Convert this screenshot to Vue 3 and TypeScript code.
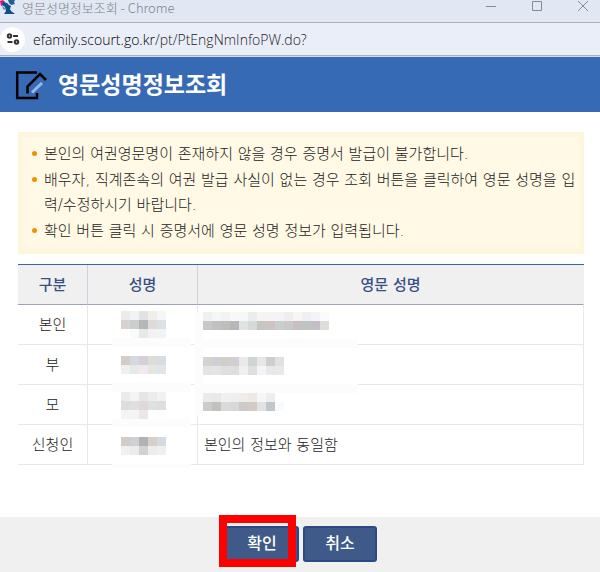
<script setup lang="ts">
interface Row {
  label: string
  english: string
}

interface Mosaic {
  x: number
  y: number
  rows: string[][]
}

const notices: string[] = [
  '본인의 여권영문명이 존재하지 않을 경우 증명서 발급이 불가합니다.',
  '배우자, 직계존속의 여권 발급 사실이 없는 경우 조회 버튼을 클릭하여 영문 성명을 입력/수정하시기 바랍니다.',
  '확인 버튼 클릭 시 증명서에 영문 성명 정보가 입력됩니다.',
]

const rows: Row[] = [
  { label: '본인', english: '' },
  { label: '부', english: '' },
  { label: '모', english: '' },
  { label: '신청인', english: '본인의 정보와 동일함' },
]

// Blocks that hide personal names, in table coordinates.
const cell = 9
const mosaics: Mosaic[] = [
  { x: 103, y: 47, rows: [
    ['#eeecea', '#f1f3f4', '#e2e2e4', '#f0eeea', '#f4f5f8'],
    ['#d8d2d0', '#cacecf', '#b5b6b8', '#dedad8', '#dce1e5'],
    ['#ffffff', '#fafafa', '#e8e8e9', '#f3f1f3', '#f2f3f3'],
  ] },
  { x: 103, y: 92, rows: [
    ['#d3ccc8', '#d2dadf', '#d9ced7', '#dcdddb', '#d7dce0'],
    ['#f1f0ef', '#e7e9e8', '#f2e9ef', '#e5e6e0', '#e1e5e9'],
  ] },
  { x: 103, y: 128, rows: [
    ['#ebebeb', '#f4f4f3', '#e8e4e6', '#ececec', '#f2f2f2'],
    ['#dddddd', '#dfdfdf', '#e0d9dc', '#dfe1e1', '#dddfdc'],
    ['#f3f4f4', '#f3f4f3', '#e9e8e7', '#fdffff', '#fdfdfd'],
  ] },
  { x: 103, y: 173, rows: [
    ['#d1ccc8', '#cdd1d4', '#b2b2b5', '#d5d1ca', '#d4dae1'],
    ['#f0f0ef', '#eaebeb', '#d1d1d6', '#eeebed', '#eff0f0'],
  ] },
  { x: 185, y: 48, rows: [
    ['#f0f0ee', '#f4f6f8', '#f2f2f2', '#f8f8f7', '#f7f7f7', '#eaeded', '#f4f4f1', '#f6f4f2', '#f3f4f3', '#eeeeef', '#f5f5f4', '#f0eeef', '#f3f4f8', '#fafbfa'],
    ['#c8c8c7', '#c2c0c2', '#bfbebb', '#b9b5bd', '#e1e3e0', '#d5d9da', '#c6c6c0', '#cfc2c7', '#c9cfca', '#cacace', '#c6c0c3', '#bec3c4', '#c4bfc6', '#dbded9'],
  ] },
  { x: 185, y: 93, rows: [
    ['#d3d3cf', '#cfcfd4', '#d1ceca', '#d1cfd5', '#e9e9e9', '#cfd4d5', '#eae5e7', '#cdcece', '#e1e1e3'],
    ['#e3e3e4', '#e5e4e3', '#dfdfe1', '#e0dde0', '#eff0ef', '#dddfe3', '#f5f3f7', '#e8e8e8', '#e8e9ea'],
  ] },
  { x: 185, y: 129, rows: [
    ['#eaeceb', '#e9eae8', '#f0f0f0', '#efefef', '#efedea', '#eee9e6', '#f6f6f7', '#eceef2'],
    ['#cbcccb', '#c1c2bc', '#dadbd9', '#d8d8d8', '#cccac9', '#d3cac5', '#e2e3e5', '#c2c6c8', '#f9faff'],
  ] },
]
</script>

<template>
  <div class="window">
    <header class="titlebar">
      <svg class="favicon" width="16" height="15" viewBox="0 0 16 15" aria-hidden="true">
        <path d="M0 1l3-1 2 2-2 3-2 1z" fill="#d5127d" />
        <path d="M3 2l4 1 2 2 2 1-1 3 1 2 4 3H4l2-3-1-4-3-2z" fill="#0d4f8c" />
        <path d="M8 0h7l-1 2 1 2-4 1-2-2z" fill="#1f5f9c" />
        <path d="M2 6l3 2v2l-2-1z" fill="#5b93c4" />
      </svg>
      <span class="window-title">영문성명정보조회 - Chrome</span>
      <div class="controls">
        <button type="button" aria-label="최소화">
          <svg width="12" height="12" viewBox="0 0 12 12"><path d="M1 6.5h10" /></svg>
        </button>
        <button type="button" aria-label="최대화">
          <svg width="12" height="12" viewBox="0 0 12 12"><path d="M1.500 1.500h9v9h-9z" /></svg>
        </button>
        <button type="button" aria-label="닫기">
          <svg width="12" height="12" viewBox="0 0 12 12"><path d="M1 1l10 10M11 1L1 11" /></svg>
        </button>
      </div>
    </header>

    <div class="address">
      <button type="button" class="site-info" aria-label="사이트 정보">
        <svg width="14" height="12" viewBox="0 0 14 12" fill="none" stroke="#333" stroke-width="2">
          <circle cx="3.500" cy="3" r="1.700" /><path d="M7 3h5" />
          <circle cx="10.500" cy="9" r="1.700" /><path d="M1.500 9h5" />
        </svg>
      </button>
      <span>efamily.scourt.go.kr<span class="path">/pt/PtEngNmInfoPW.do?</span></span>
    </div>

    <div class="banner">
      <svg width="32" height="30" viewBox="0 0 32 30" fill="none" aria-hidden="true">
        <path d="M22 2.500H2.200V28H22v-5" stroke="#000" stroke-width="2.500" />
        <path d="M12.500 23.500v-7L25 4l6 6" stroke="#000" stroke-width="2.600" />
        <path d="M17 22.500L27 13" stroke="#9bb8e4" stroke-width="3" />
      </svg>
      <h1>영문성명정보조회</h1>
    </div>

    <main>
      <ul class="notice">
        <li v-for="text in notices" :key="text">{{ text }}</li>
      </ul>

      <div class="table-wrap">
        <table>
          <thead>
            <tr>
              <th scope="col" class="kind">구분</th>
              <th scope="col" class="name">성명</th>
              <th scope="col">영문 성명</th>
            </tr>
          </thead>
          <tbody>
            <tr v-for="row in rows" :key="row.label">
              <td>{{ row.label }}</td>
              <td></td>
              <td class="english">{{ row.english }}</td>
            </tr>
          </tbody>
        </table>
        <svg class="masks" width="342" height="206" viewBox="0 0 342 206" shape-rendering="crispEdges" aria-hidden="true">
          <g fill="#fcfcfc">
            <path d="M94 74h79v9H94zM94 119h79v9H94zM94 155h79v8H94zM94 200h79v4H94z" />
            <path d="M176 48h9v104h-9zM176 75h164v9H176zM176 120h164v9H176z" />
          </g>
          <g v-for="(m, i) in mosaics" :key="i">
            <template v-for="(line, r) in m.rows" :key="r">
              <rect
                v-for="(color, c) in line"
                :key="c"
                :x="m.x + c * cell"
                :y="m.y + r * cell"
                :width="cell"
                :height="cell"
                :fill="color"
              />
            </template>
          </g>
        </svg>
      </div>
    </main>

    <footer>
      <div class="marked">
        <button type="button" class="action">확인</button>
        <span class="marker"></span>
      </div>
      <button type="button" class="action">취소</button>
    </footer>
  </div>
</template>

<style>
body {
  margin: 0;
  background: #fff;
}
</style>

<style scoped>
.window {
  display: flex;
  flex-direction: column;
  min-height: 100vh;
  box-sizing: border-box;
  font-family: "Noto Sans CJK KR", sans-serif;
  font-size: 15px;
  font-weight: 300;
  color: #222;
}

button {
  font: inherit;
  padding: 0;
  border: 0;
  background: none;
}

.titlebar {
  display: flex;
  align-items: flex-start;
  height: 22px;
  background: #e1e8f3;
  border-bottom: 1px solid #b0b2b5;
}

.window-title {
  margin-left: 6px;
  font-size: 13px;
  line-height: 16px;
  color: #80848b;
}

.controls {
  display: flex;
  gap: 34px;
  margin-left: auto;
  padding-right: 11px;
}

.controls button {
  display: flex;
  width: 12px;
  height: 12px;
}

.controls svg {
  fill: none;
  stroke: #868c95;
}

.address {
  display: flex;
  align-items: center;
  gap: 8px;
  height: 32px;
  background: #eaeef8;
  border-bottom: 1px solid #aeb0b3;
  font-family: "Open Sans", sans-serif;
  font-size: 14px;
  color: #000;
}

.address .path {
  color: #222;
}

.site-info {
  display: flex;
  align-items: center;
  justify-content: center;
  width: 25px;
  height: 25px;
  border-radius: 50%;
  background: #fff;
}

.banner {
  display: flex;
  align-items: center;
  gap: 11px;
  height: 55px;
  padding-left: 15px;
  border-top: 1px solid #d5dbe5;
  background: #376ab5;
}

h1 {
  margin: 0;
  padding-bottom: 4px;
  font-size: 23px;
  font-weight: 700;
  line-height: 30px;
  color: #fff;
}

main {
  flex: 1;
  padding: 20px 16px 20px 18px;
  font-family: "DejaVu Sans", "Noto Sans CJK KR", sans-serif;
}

.notice {
  display: grid;
  gap: 1px;
  margin: 0;
  padding: 5px 0 5px 21px;
  border: 5px solid #fdf6dc;
  background: #fff9e5;
  list-style: none;
}

.notice li {
  position: relative;
  line-height: 25px;
  word-break: break-all;
}

.notice li::before {
  content: "";
  position: absolute;
  left: -12px;
  top: 9px;
  width: 5px;
  height: 5px;
  border-radius: 50%;
  background: #f29100;
}

.table-wrap {
  position: relative;
  margin-top: 10px;
}

table {
  width: 100%;
  table-layout: fixed;
  border-collapse: separate;
  border-spacing: 0;
  border-top: 1px solid #3a66ad;
}

th,
td {
  height: 39px;
  padding: 0;
  line-height: 24px;
  text-align: center;
  border-right: 1px solid #e8e8ea;
  border-bottom: 1px solid #e8e8ea;
}

th {
  background: #f0f0f0;
  border-right-color: #d0d2df;
  border-bottom-color: #9ba3b6;
  font-weight: 500;
  color: #364f85;
}

th:last-child {
  border-right-color: #f0f0f0;
}

.kind {
  width: 69px;
}

.name {
  width: 109px;
}

td.english {
  padding-left: 6px;
  text-align: left;
}

.masks {
  position: absolute;
  left: 0;
  top: 0;
}

footer {
  display: flex;
  justify-content: center;
  gap: 4px;
  padding: 9px 0 10px 2px;
  background: #f0f0f0;
}

.action {
  display: block;
  width: 74px;
  height: 36px;
  padding-bottom: 4px;
  border: 2px solid #2b4a85;
  border-radius: 3px;
  background: #3f5989;
  font-size: 16px;
  font-weight: 500;
  color: #fff;
}

.marked {
  position: relative;
}

.marker {
  position: absolute;
  left: -6px;
  top: -11px;
  width: 61px;
  height: 36px;
  border: 8px solid #f00;
}
</style>
